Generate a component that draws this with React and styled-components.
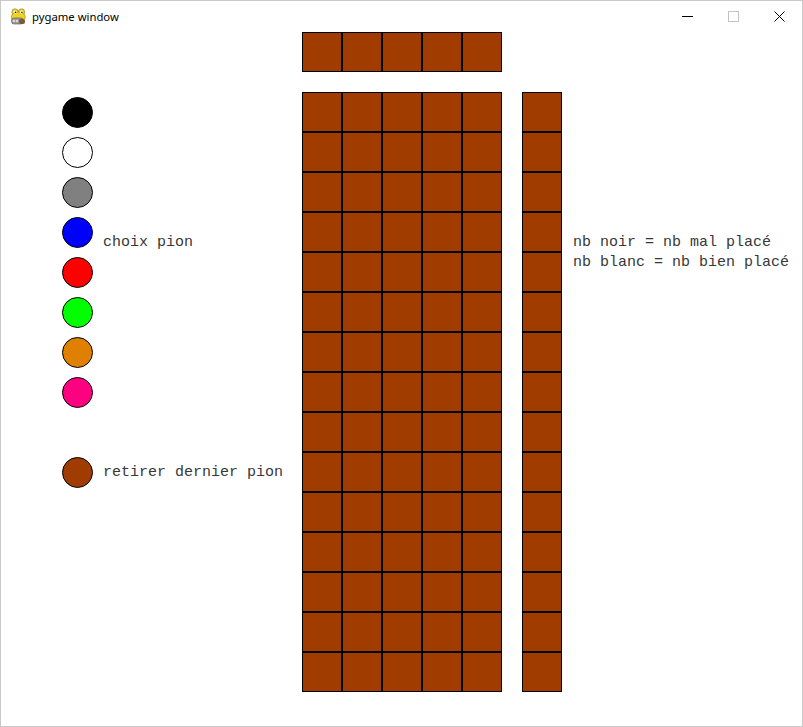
import React from "react";
import styled, { createGlobalStyle } from "styled-components";

const Global = createGlobalStyle`
  html, body { margin: 0; padding: 0; background: #ffffff; }
  * { box-sizing: border-box; }
`;

const BROWN = "#a03c00";

const Window = styled.div`
  width: 803px;
  height: 727px;
  border: 1px solid #c9c9c9;
  background: #ffffff;
  display: flex;
  flex-direction: column;
  overflow: hidden;
`;

const TitleBar = styled.div`
  height: 31px;
  display: flex;
  align-items: center;
  padding-left: 9px;
  flex-shrink: 0;
`;

const Title = styled.span`
  font-family: "Segoe UI", "Noto Sans", "Open Sans", sans-serif;
  font-size: 11.3px;
  color: #000;
  margin-left: 5px;
  margin-top: -1px;
`;

const Controls = styled.div`
  margin-left: auto;
  display: flex;
  height: 100%;
`;

const ControlButton = styled.div`
  width: 46px;
  height: 100%;
  display: flex;
  align-items: center;
  justify-content: center;
  padding-bottom: 1px;
`;

const Client = styled.div`
  flex: 1;
  display: flex;
  align-items: flex-start;
`;

const LeftPanel = styled.div`
  width: 301px;
  padding: 60px 0 0 61px;
  display: flex;
  flex-direction: column;
`;

const PawnRow = styled.div`
  height: 40px;
  display: flex;
  align-items: flex-start;
`;

const Spacer = styled.div`
  height: 40px;
`;

const Pawn = styled.div`
  width: 31px;
  height: 31px;
  margin-top: 5px;
  border-radius: 50%;
  border: 1px solid #000;
  background: ${(p) => p.$color};
  flex-shrink: 0;
`;

const Label = styled.span`
  font-family: "Liberation Mono", "Courier New", monospace;
  font-size: 15px;
  line-height: 15px;
  color: #383838;
  margin: ${(p) => p.$top}px 0 0 10px;
  white-space: pre;
`;

const Board = styled.div`
  display: flex;
  flex-direction: column;
  gap: 20px;
`;

const MainRow = styled.div`
  display: flex;
  gap: 20px;
`;

const Grid = styled.div`
  display: grid;
  grid-template-columns: repeat(${(p) => p.$cols}, 40px);
  grid-auto-rows: 40px;
`;

const Cell = styled.div`
  width: 40px;
  height: 40px;
  border: 1px solid #000;
  background: ${BROWN};
`;

const Legend = styled.div`
  margin-left: 11px;
  padding-top: 201px;
  display: flex;
  flex-direction: column;
`;

const LegendLine = styled.span`
  font-family: "Liberation Mono", "Courier New", monospace;
  font-size: 15px;
  line-height: 20px;
  color: #383838;
  white-space: pre;
`;

const PygameIcon = () => (
  <svg width="17" height="18" viewBox="0 0 17 18">
    <ellipse cx="5" cy="4" rx="3.2" ry="3.2" fill="#f2d21e" stroke="#8a7a10" strokeWidth="0.6" />
    <ellipse cx="11.5" cy="4" rx="3.2" ry="3.2" fill="#f2d21e" stroke="#8a7a10" strokeWidth="0.6" />
    <ellipse cx="8.3" cy="9" rx="7" ry="5" fill="#f2d21e" stroke="#8a7a10" strokeWidth="0.6" />
    <circle cx="5" cy="4" r="1.6" fill="#fff" />
    <circle cx="11.5" cy="4" r="1.6" fill="#fff" />
    <circle cx="5.4" cy="4.2" r="0.8" fill="#000" />
    <circle cx="11.9" cy="4.2" r="0.8" fill="#000" />
    <rect x="1.5" y="10" width="12" height="6" rx="2.5" fill="#9a9a9a" stroke="#555" strokeWidth="0.6" />
    <rect x="9" y="11" width="6" height="5" rx="2" fill="#7a5a3a" />
    <circle cx="4" cy="13" r="1.2" fill="#ddd" />
    <circle cx="7" cy="13" r="1.2" fill="#ddd" />
  </svg>
);

const MinIcon = () => (
  <svg width="11" height="11" viewBox="0 0 11 11">
    <line x1="0" y1="5.5" x2="11" y2="5.5" stroke="#000" strokeWidth="1" />
  </svg>
);

const MaxIcon = () => (
  <svg width="11" height="11" viewBox="0 0 11 11">
    <rect x="0.5" y="0.5" width="10" height="10" fill="none" stroke="#c4c4c4" strokeWidth="1" />
  </svg>
);

const CloseIcon = () => (
  <svg width="11" height="11" viewBox="0 0 11 11">
    <line x1="0.5" y1="0.5" x2="10.5" y2="10.5" stroke="#000" strokeWidth="1" />
    <line x1="10.5" y1="0.5" x2="0.5" y2="10.5" stroke="#000" strokeWidth="1" />
  </svg>
);

const colors = ["#000000", "#ffffff", "#808080", "#0000ff", "#ff0000", "#00ff00", "#e08000", "#ff0080"];

export default function App() {
  return (
    <>
      <Global />
      <Window>
        <TitleBar>
          <PygameIcon />
          <Title>pygame window</Title>
          <Controls>
            <ControlButton><MinIcon /></ControlButton>
            <ControlButton><MaxIcon /></ControlButton>
            <ControlButton><CloseIcon /></ControlButton>
          </Controls>
        </TitleBar>
        <Client>
          <LeftPanel>
            {colors.map((c, i) => (
              <PawnRow key={c}>
                <Pawn $color={c} />
                {i === 3 && <Label $top={23}>choix pion</Label>}
              </PawnRow>
            ))}
            <Spacer />
            <PawnRow>
              <Pawn $color={BROWN} />
              <Label $top={13}>retirer dernier pion</Label>
            </PawnRow>
          </LeftPanel>
          <Board>
            <Grid $cols={5}>
              {Array.from({ length: 5 }).map((_, i) => (
                <Cell key={i} />
              ))}
            </Grid>
            <MainRow>
              <Grid $cols={5}>
                {Array.from({ length: 75 }).map((_, i) => (
                  <Cell key={i} />
                ))}
              </Grid>
              <Grid $cols={1}>
                {Array.from({ length: 15 }).map((_, i) => (
                  <Cell key={i} />
                ))}
              </Grid>
            </MainRow>
          </Board>
          <Legend>
            <LegendLine>nb noir = nb mal placé</LegendLine>
            <LegendLine>nb blanc = nb bien placé</LegendLine>
          </Legend>
        </Client>
      </Window>
    </>
  );
}
